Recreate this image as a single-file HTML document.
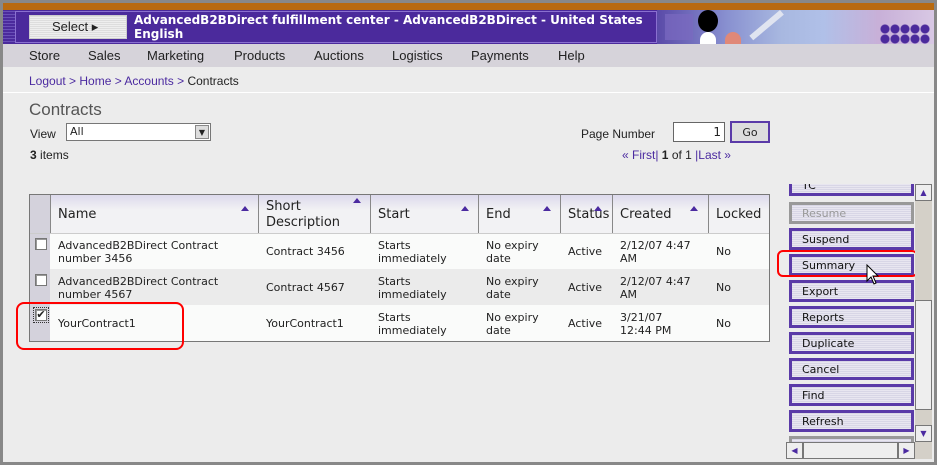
<!DOCTYPE html><html><head><style>
*{margin:0;padding:0;box-sizing:border-box}
body{width:937px;height:465px;overflow:hidden;background:#ececec;font-family:"DejaVu Sans","Liberation Sans",sans-serif;font-size:11px;color:#222;position:relative}
.a{position:absolute}
.nav span{position:absolute;top:48px;font-size:13px;color:#222;font-family:"Liberation Sans",sans-serif}
.btn{position:absolute;left:789px;width:125px;height:22px;border:3px solid #5a3aa8;background:repeating-linear-gradient(0deg,#e8e6f0 0 1px,#d8d6e6 1px 2px);font-size:11px;padding:2px 0 0 10px;color:#111}
.hdr{position:absolute;top:195px;height:38px;border-left:1px solid #888;font-size:13px;padding-left:7px;background:linear-gradient(#dcd9ec,#f2f2f4 40%)}
.row{position:absolute;left:29px;width:740px;height:36px}
.c{position:absolute;font-size:11px;line-height:13px}
.tri{position:absolute;width:0;height:0;border-left:4px solid transparent;border-right:4px solid transparent;border-bottom:5px solid #4b2aa0}
.cb{position:absolute;left:35px;width:12px;height:12px;border:1px solid #777;background:#fff;box-shadow:inset 1px 1px #999}
</style></head><body>
<div class="a" style="left:0;top:0;width:937px;height:3px;background:#888"></div>
<div class="a" style="left:0;top:0;width:3px;height:465px;background:#888"></div>
<div class="a" style="left:0;top:462px;width:937px;height:3px;background:#888"></div>
<div class="a" style="left:934px;top:0;width:3px;height:465px;background:#888"></div>
<div class="a" style="left:3px;top:3px;width:931px;height:7px;background:#b86a10"></div>
<div class="a" style="left:3px;top:10px;width:931px;height:34px;background:#4b2a9c"></div>
<div class="a" style="left:3px;top:10px;width:12px;height:34px;background:repeating-linear-gradient(0deg,#4b2a9c 0 2px,#6a50b8 2px 3px)"></div>
<div class="a" style="left:15px;top:11px;width:642px;height:32px;border:1px solid #8a70d0"></div>
<div class="a" style="left:29px;top:15px;width:98px;height:24px;background:repeating-linear-gradient(0deg,#eee 0 1px,#ddd 1px 2px);border:1px solid #ccc;font-size:13px;padding:3px 0 0 22px;font-family:'Liberation Sans',sans-serif">Select ▸</div>
<div class="a" style="left:134px;top:13px;color:#fff;font-weight:bold;font-size:12px;line-height:14px">AdvancedB2BDirect fulfillment center - AdvancedB2BDirect - United States<br>English</div>
<div class="a" style="left:657px;top:10px;width:277px;height:34px;background:linear-gradient(90deg,#5a4aa8,#8890d0 25%,#a8b8e0 45%,#b0c0e8 60%,#c8b0d8 80%,#d8c8e4)"></div>
<div class="a" style="left:665px;top:14px;width:28px;height:26px;background:#7a6ac0;opacity:.7"></div>
<div class="a" style="left:740px;top:10px;width:6px;height:40px;background:#e0e4f0;transform:rotate(50deg);transform-origin:top left;left:780px"></div>
<div class="a" style="left:698px;top:10px;width:20px;height:22px;border-radius:50%;background:#000"></div>
<div class="a" style="left:700px;top:32px;width:16px;height:12px;border-radius:8px 8px 0 0;background:#fff"></div>
<div class="a" style="left:725px;top:32px;width:16px;height:12px;border-radius:8px 8px 0 0;background:#e08878"></div>
<div class="a" style="left:880px;top:24px;width:50px;height:20px;background:radial-gradient(circle at 5px 5px,#4b2a9c 4px,transparent 5px) 0 0/10px 10px"></div>
<div class="a" style="left:3px;top:44px;width:931px;height:23px;background:#d6d3da"></div>
<div class="nav"><span style="left:29px">Store</span><span style="left:88px">Sales</span><span style="left:147px">Marketing</span><span style="left:234px">Products</span><span style="left:314px">Auctions</span><span style="left:392px">Logistics</span><span style="left:471px">Payments</span><span style="left:558px">Help</span></div>
<div class="a" style="left:29px;top:74px;font-family:'Liberation Sans',sans-serif;font-size:12px;color:#4b2aa0">Logout &gt; Home &gt; Accounts &gt; <span style="color:#222">Contracts</span></div>
<div class="a" style="left:3px;top:92px;width:931px;height:1px;background:#fff"></div>
<div class="a" style="left:29px;top:100px;font-size:17px;color:#555;font-family:'Liberation Sans',sans-serif">Contracts</div>
<div class="a" style="left:30px;top:127px;font-size:12px;font-family:'Liberation Sans',sans-serif">View</div>
<div class="a" style="left:66px;top:123px;width:145px;height:18px;background:#fff;border:1px solid #777;padding:1px 3px;font-size:11px">All</div>
<div class="a" style="left:195px;top:125px;width:14px;height:14px;background:#ddd;border:1px solid #888;font-size:8px;text-align:center;line-height:13px">▼</div>
<div class="a" style="left:30px;top:148px;font-size:12px;font-family:'Liberation Sans',sans-serif"><b>3</b> items</div>
<div class="a" style="left:581px;top:127px;font-size:12px;font-family:'Liberation Sans',sans-serif">Page Number</div>
<div class="a" style="left:673px;top:122px;width:52px;height:20px;background:#fff;border:1px solid #666;text-align:right;padding:2px 3px;font-size:12px">1</div>
<div class="a" style="left:730px;top:121px;width:40px;height:22px;border:2px solid #5a3aa8;background:#ddd;text-align:center;padding-top:3px;font-size:11px">Go</div>
<div class="a" style="left:622px;top:148px;font-size:12px;font-family:'Liberation Sans',sans-serif;color:#4b2aa0">« First| <b style="color:#222">1</b> <span style="color:#222">of 1</span> |Last »</div>
<div class="a" style="left:29px;top:194px;width:741px;height:148px;border:1px solid #777;background:#fafbfa"></div>
<div class="hdr" style="left:30px;width:20px;border-left:none;background:#d4d2dc"></div>
<div class="hdr" style="left:50px;width:208px;padding-top:12px">Name</div>
<div class="hdr" style="left:258px;width:112px;padding-top:4px;line-height:16px">Short<br>Description</div>
<div class="hdr" style="left:370px;width:108px;padding-top:12px">Start</div>
<div class="hdr" style="left:478px;width:82px;padding-top:12px">End</div>
<div class="hdr" style="left:560px;width:52px;padding-top:12px;padding-left:7px">Status</div>
<div class="hdr" style="left:612px;width:96px;padding-top:12px">Created</div>
<div class="hdr" style="left:708px;width:61px;padding-top:12px">Locked</div>
<div class="tri" style="left:241px;top:206px"></div><div class="tri" style="left:353px;top:198px"></div><div class="tri" style="left:461px;top:206px"></div><div class="tri" style="left:543px;top:206px"></div><div class="tri" style="left:594px;top:206px"></div><div class="tri" style="left:690px;top:206px"></div>
<div class="a" style="left:30px;top:233px;width:739px;height:1px;background:#ccc"></div>
<div class="a" style="left:30px;top:234px;width:20px;height:107px;background:#d4d2dc"></div>
<div class="row" style="top:269px;left:50px;width:719px;background:#ebebeb"></div>
<div class="cb" style="top:238px"></div><div class="cb" style="top:274px"></div>
<div class="cb" style="top:309px;font-size:11px;line-height:10px;text-align:center;outline:1px dotted #333;outline-offset:1px">✔</div>
<div class="c" style="left:58px;top:239px">AdvancedB2BDirect Contract<br>number 3456</div>
<div class="c" style="left:58px;top:275px">AdvancedB2BDirect Contract<br>number 4567</div>
<div class="c" style="left:58px;top:317px">YourContract1</div>
<div class="c" style="left:266px;top:245px">Contract 3456</div>
<div class="c" style="left:266px;top:281px">Contract 4567</div>
<div class="c" style="left:266px;top:317px">YourContract1</div>
<div class="c" style="left:378px;top:239px">Starts<br>immediately</div><div class="c" style="left:378px;top:275px">Starts<br>immediately</div><div class="c" style="left:378px;top:311px">Starts<br>immediately</div>
<div class="c" style="left:486px;top:239px">No expiry<br>date</div><div class="c" style="left:486px;top:275px">No expiry<br>date</div><div class="c" style="left:486px;top:311px">No expiry<br>date</div>
<div class="c" style="left:568px;top:245px">Active</div><div class="c" style="left:568px;top:281px">Active</div><div class="c" style="left:568px;top:317px">Active</div>
<div class="c" style="left:620px;top:239px">2/12/07 4:47<br>AM</div><div class="c" style="left:620px;top:275px">2/12/07 4:47<br>AM</div><div class="c" style="left:620px;top:311px">3/21/07<br>12:44 PM</div>
<div class="c" style="left:716px;top:245px">No</div><div class="c" style="left:716px;top:281px">No</div><div class="c" style="left:716px;top:317px">No</div>
<div class="a" style="left:16px;top:302px;width:168px;height:48px;border:2px solid #f00;border-radius:8px"></div>
<div class="a" style="left:786px;top:184px;width:129px;height:258px;overflow:hidden">
<div class="btn" style="left:3px;top:-10px">TC</div>
<div class="btn" style="left:3px;top:18px;border-color:#999;color:#999">Resume</div>
<div class="btn" style="left:3px;top:44px">Suspend</div>
<div class="btn" style="left:3px;top:70px">Summary</div>
<div class="btn" style="left:3px;top:96px">Export</div>
<div class="btn" style="left:3px;top:122px">Reports</div>
<div class="btn" style="left:3px;top:148px">Duplicate</div>
<div class="btn" style="left:3px;top:174px">Cancel</div>
<div class="btn" style="left:3px;top:200px">Find</div>
<div class="btn" style="left:3px;top:226px">Refresh</div>
<div class="btn" style="left:3px;top:252px;border-color:#999"></div>
</div>
<div class="a" style="left:777px;top:250px;width:141px;height:27px;border:2px solid #f00;border-radius:6px"></div>
<svg class="a" style="left:866px;top:264px" width="14" height="22" viewBox="0 0 14 22"><path d="M1 1 L1 17 L5 13 L8 20 L10 19 L7 12 L12 12 Z" fill="#fff" stroke="#000" stroke-width="1"/></svg>
<div class="a" style="left:915px;top:184px;width:17px;height:258px;background:#d4d0c8"></div>
<div class="a" style="left:915px;top:184px;width:17px;height:17px;background:#eee;border:1px solid #777;font-size:8px;text-align:center;color:#4b2aa0;line-height:15px">▲</div>
<div class="a" style="left:915px;top:300px;width:17px;height:110px;background:#eee;border:1px solid #777"></div>
<div class="a" style="left:915px;top:425px;width:17px;height:17px;background:#eee;border:1px solid #777;font-size:8px;text-align:center;color:#4b2aa0;line-height:15px">▼</div>
<div class="a" style="left:786px;top:442px;width:146px;height:17px;background:#d4d0c8"></div>
<div class="a" style="left:786px;top:442px;width:17px;height:17px;background:#eee;border:1px solid #777;font-size:8px;text-align:center;color:#4b2aa0;line-height:15px">◀</div>
<div class="a" style="left:803px;top:442px;width:95px;height:17px;background:#eee;border:1px solid #777"></div>
<div class="a" style="left:898px;top:442px;width:17px;height:17px;background:#eee;border:1px solid #777;font-size:8px;text-align:center;color:#4b2aa0;line-height:15px">▶</div>
</body></html>
